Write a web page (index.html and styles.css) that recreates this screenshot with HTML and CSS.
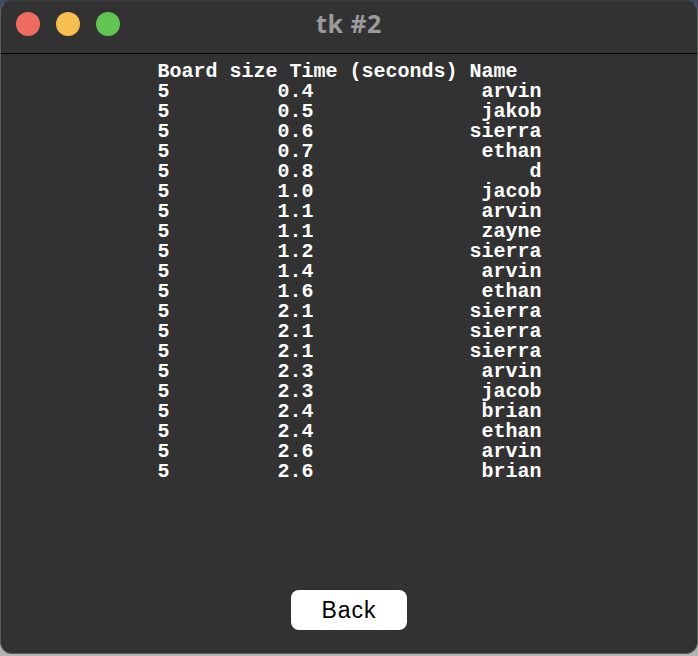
FILE: index.html
```html
<!DOCTYPE html>
<html>
<head>
<meta charset="utf-8">
<title>tk #2</title>
<link rel="stylesheet" href="styles.css">
</head>
<body>
<div class="window">
  <div class="titlebar">
    <div class="lights">
      <span class="light red"></span>
      <span class="light yellow"></span>
      <span class="light green"></span>
    </div>
    <div class="title">tk #2</div>
  </div>
  <div class="content">
<pre class="scores">Board size Time (seconds) Name
5         0.4              arvin
5         0.5              jakob
5         0.6             sierra
5         0.7              ethan
5         0.8                  d
5         1.0              jacob
5         1.1              arvin
5         1.1              zayne
5         1.2             sierra
5         1.4              arvin
5         1.6              ethan
5         2.1             sierra
5         2.1             sierra
5         2.1             sierra
5         2.3              arvin
5         2.3              jacob
5         2.4              brian
5         2.4              ethan
5         2.6              arvin
5         2.6              brian</pre>
    <button class="back">Back</button>
  </div>
</div>
</body>
</html>
```

FILE: styles.css
```css
html, body {
  margin: 0;
  padding: 0;
}
body {
  width: 698px;
  height: 656px;
  overflow: hidden;
  background: linear-gradient(180deg, #3e4b68 0%, #6d7690 40%, #b3b3b3 100%);
}
.window {
  box-sizing: border-box;
  width: 698px;
  height: 654px;
  background: #323232;
  border: 1px solid #5e5e5e;
  border-top-color: #3e3e3e;
  border-radius: 12px;
  display: flex;
  flex-direction: column;
  overflow: hidden;
}
.titlebar {
  position: relative;
  height: 52px;
  flex: none;
  border-bottom: 1px solid #000;
  display: flex;
  align-items: center;
  justify-content: center;
}
.lights {
  position: absolute;
  left: 15px;
  top: 11px;
  display: flex;
  gap: 16px;
}
.light {
  width: 24px;
  height: 24px;
  border-radius: 50%;
  display: block;
}
.red { background: #ee6b60; }
.yellow { background: #f5bf4f; }
.green { background: #61c554; }
.title {
  font-family: "Open Sans", "Liberation Sans", sans-serif;
  font-weight: 700;
  font-size: 25px;
  color: #9b9b9b;
  margin-top: -8px;
  letter-spacing: 0.5px;
}
.content {
  flex: 1;
  display: flex;
  flex-direction: column;
  align-items: center;
}
.scores {
  margin: 8px 0 0 0;
  font-family: "Liberation Mono", "Courier New", monospace;
  font-weight: 700;
  font-size: 20px;
  line-height: 20px;
  color: #ffffff;
  width: 384px;
  padding-left: 1px;
}
.back {
  margin-top: auto;
  margin-bottom: 23px;
  width: 116px;
  height: 40px;
  background: #ffffff;
  border: none;
  border-radius: 8px;
  font-family: "Liberation Sans", Arial, sans-serif;
  font-size: 23px;
  letter-spacing: 1px;
  color: #000;
  padding: 0;
}
```
